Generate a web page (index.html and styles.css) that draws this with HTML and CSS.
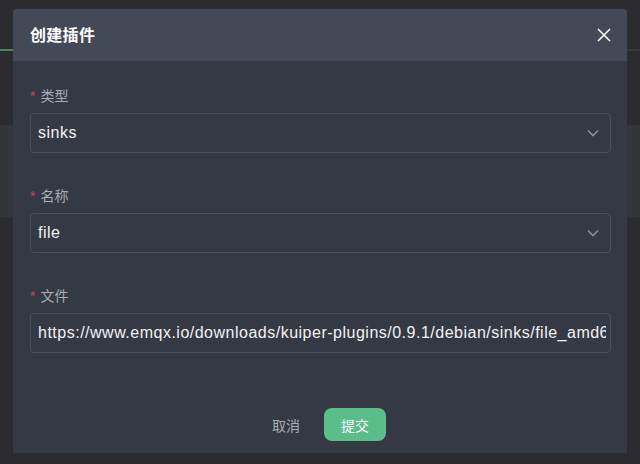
FILE: index.html
```html
<!DOCTYPE html>
<html lang="zh">
<head>
<meta charset="utf-8">
<link rel="stylesheet" href="styles.css">
</head>
<body>
<div class="page">
  <div class="topbar"><div class="tab-active"></div></div>
  <div class="spacer"></div>
  <div class="band"></div>
</div>
<div class="dialog">
  <div class="dialog-header">
    <span class="dialog-title">创建插件</span>
    <svg class="close" width="14" height="14" viewBox="0 0 14 14"><path d="M1 1L13 13M13 1L1 13" stroke="#ffffff" stroke-width="1.6" fill="none"/></svg>
  </div>
  <div class="dialog-body">
    <div class="field">
      <div class="label"><span class="star">*</span>类型</div>
      <div class="input select"><span>sinks</span>
        <svg class="chev" width="12" height="8" viewBox="0 0 12 8"><path d="M1 1.5L6 6.5L11 1.5" stroke="#8a8f9c" stroke-width="1.6" fill="none"/></svg>
      </div>
    </div>
    <div class="field">
      <div class="label"><span class="star">*</span>名称</div>
      <div class="input select"><span>file</span>
        <svg class="chev" width="12" height="8" viewBox="0 0 12 8"><path d="M1 1.5L6 6.5L11 1.5" stroke="#8a8f9c" stroke-width="1.6" fill="none"/></svg>
      </div>
    </div>
    <div class="field">
      <div class="label"><span class="star">*</span>文件</div>
      <input class="input text-input" type="text" readonly value="https://www.emqx.io/downloads/kuiper-plugins/0.9.1/debian/sinks/file_amd64.zip">
    </div>
  </div>
  <div class="dialog-footer">
    <button class="btn-cancel">取消</button>
    <button class="btn-submit">提交</button>
  </div>
</div>
</body>
</html>
```
FILE: styles.css
```css
html, body {
  margin: 0;
  padding: 0;
  width: 640px;
  height: 464px;
  overflow: hidden;
  background: #2c2c30;
  font-family: "Liberation Sans", "Noto Sans CJK SC", sans-serif;
}
.page {
  height: 464px;
  display: flex;
  flex-direction: column;
}
.topbar {
  height: 49px;
  border-bottom: 2px solid #38393e;
  position: relative;
}
.tab-active {
  position: absolute;
  left: 0;
  bottom: -2px;
  width: 80px;
  height: 2px;
  background: #3f8a61;
}
.spacer {
  height: 74px;
}
.band {
  height: 92px;
  background: #343539;
}
.dialog {
  position: absolute;
  left: 13px;
  top: 9px;
  width: 614px;
  height: 444px;
  background: #353944;
  border-radius: 4px 4px 0 0;
  display: flex;
  flex-direction: column;
  overflow: hidden;
}
.dialog-header {
  height: 52px;
  background: #434957;
  display: flex;
  align-items: center;
  justify-content: space-between;
  padding: 0 16px 0 17px;
  flex-shrink: 0;
}
.dialog-title {
  color: #ffffff;
  font-size: 16px;
  font-weight: bold;
  letter-spacing: 0.3px;
  margin-top: -2px;
}
.close {
  display: block;
}
.dialog-body {
  padding: 25px 16px 0 17px;
  flex: 1;
}
.field {
  margin-bottom: 33px;
}
.label {
  height: 20px;
  line-height: 20px;
  font-size: 14px;
  color: #a9acb3;
  margin-bottom: 7px;
}
.star {
  color: #c2475c;
  margin-right: 5px;
}
.input {
  width: 100%;
  height: 40px;
  box-sizing: border-box;
  border: 1px solid #4b505d;
  border-radius: 4px;
  background: transparent;
  display: flex;
  align-items: center;
  justify-content: space-between;
  padding: 0 11px 0 7px;
  color: #f2f2f2;
  font-family: inherit;
  font-size: 16px;
  letter-spacing: 0.5px;
  overflow: hidden;
  white-space: nowrap;
  margin: 0;
  outline: none;
}
.text-input {
  display: block;
  padding: 0 4px 0 7px;
}
.chev {
  display: block;
  flex-shrink: 0;
}
.dialog-footer {
  display: flex;
  justify-content: center;
  align-items: center;
  gap: 12px;
  padding: 0 0 12px 0;
  margin-left: 6px;
}
.btn-cancel {
  background: none;
  border: none;
  color: #a9acb3;
  font-family: inherit;
  font-size: 14px;
  padding: 0 12px;
  height: 33px;
}
.btn-submit {
  background: #5bbd8a;
  border: none;
  border-radius: 8px;
  color: #ffffff;
  font-family: inherit;
  font-size: 14px;
  width: 62px;
  height: 33px;
  padding: 0;
}
```
